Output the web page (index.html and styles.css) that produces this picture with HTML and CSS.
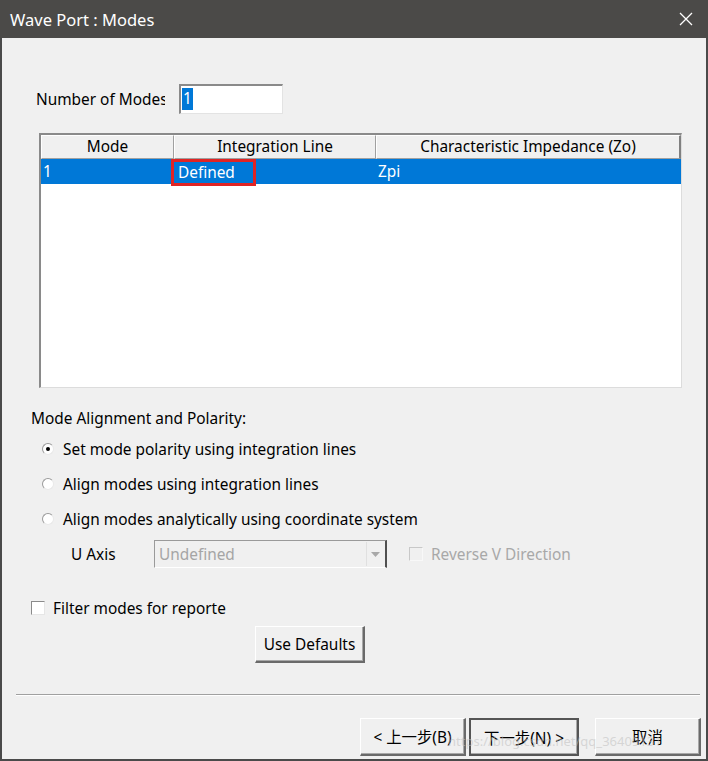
FILE: index.html
```html
<!DOCTYPE html>
<html>
<head>
<meta charset="utf-8">
<link rel="stylesheet" href="styles.css">
</head>
<body>
<div class="window">
  <div class="titlebar">
    <span class="title">Wave Port : Modes</span>
    <svg class="close" width="14" height="14" viewBox="0 0 14 14"><path d="M1 1L13 13M13 1L1 13" stroke="#fff" stroke-width="1.3" fill="none"/></svg>
  </div>
  <div class="content">
    <div class="num-row">
      <span class="num-label">Number of Modes</span>
      <div class="num-input"><span class="sel">1</span></div>
    </div>
    <div class="table">
      <div class="thead">
        <div class="th c1">Mode</div>
        <div class="th c2">Integration Line</div>
        <div class="th c3">Characteristic Impedance (Zo)</div>
      </div>
      <div class="trow selected">
        <div class="td c1">1</div>
        <div class="td c2"><span class="hl">Defined</span></div>
        <div class="td c3">Zpi</div>
      </div>
    </div>
    <div class="section-label">Mode Alignment and Polarity:</div>
    <div class="radio-row"><span class="radio on"></span><span>Set mode polarity using integration lines</span></div>
    <div class="radio-row"><span class="radio"></span><span>Align modes using integration lines</span></div>
    <div class="radio-row"><span class="radio"></span><span>Align modes analytically using coordinate system</span></div>
    <div class="axis-row">
      <span class="axis-label">U Axis</span>
      <div class="combo"><span>Undefined</span><span class="combo-btn"><svg width="9" height="5" viewBox="0 0 9 5"><path d="M0 0H9L4.5 5Z" fill="#a8a8a8"/></svg></span></div>
      <span class="check disabled"></span><span class="dis-text">Reverse V Direction</span>
    </div>
    <div class="filter-row">
      <span class="check"></span><span class="filter-text">Filter modes for reporte</span>
    </div>
    <div class="defaults-row"><button class="btn defaults">Use Defaults</button></div>
    <div class="sep"></div>
    <div class="footer">
      <button class="btn fbtn">&lt; 上一步(B)</button>
      <button class="btn fbtn default">下一步(N) &gt;</button>
      <button class="btn fbtn cancel">取消</button>
    </div>
    <div class="watermark">https://blog.csdn.net/qq_36409131</div>
  </div>
</div>
</body>
</html>
```
FILE: styles.css
```css
* { box-sizing: border-box; }
html, body { margin: 0; padding: 0; }
body {
  width: 708px; height: 761px; overflow: hidden;
  font-family: "Noto Sans", "Noto Sans CJK SC", sans-serif;
  font-size: 15.4px; color: #000; background: #f0f0f0;
}
.window {
  width: 708px; height: 761px;
  border-left: 2px solid #4a4a4a; border-right: 2px solid #4a4a4a; border-bottom: 2px solid #4a4a4a;
  display: flex; flex-direction: column; background: #f0f0f0;
}
.titlebar {
  height: 38px; background: #4b4a48; margin: 0 -2px;
  display: flex; align-items: center; justify-content: space-between;
  padding: 0 15px 0 10px; color: #fff;
}
.title { font-size: 16.5px; }
.content { position: relative; flex: 1; }
.num-row { display: flex; align-items: center; margin-top: 46px; padding-left: 34px; height: 30px; }
.num-label { width: 129px; margin-right: 14px; white-space: nowrap; overflow: hidden; }
.num-input {
  width: 104px; height: 30px; background: #fff;
  border-top: 2px solid #8a8a8a; border-left: 2px solid #8a8a8a;
  border-right: 1px solid #e3e3e3; border-bottom: 1px solid #e3e3e3;
  padding: 2px 1px; line-height: 22px;
}
.sel { background: #0078d7; color: #fff; padding: 0 1px; display: inline-block; height: 22px; }
.table {
  margin: 19px 0 0 37px; width: 643px; height: 255px; background: #fff;
  border-top: 2px solid #8a8a8a; border-left: 2px solid #8a8a8a;
  border-right: 1px solid #dcdcdc; border-bottom: 1px solid #dcdcdc;
}
.thead { display: flex; height: 24px; background: #f0f0f0; }
.th {
  text-align: center; line-height: 22px; border-right: 1px solid #a0a0a0; border-bottom: 1px solid #a0a0a0;
  border-top: 1px solid #fff; border-left: 1px solid #fff; white-space: nowrap;
}
.c1 { width: 133px; }
.c2 { width: 202px; }
.c3 { width: 305px; }
.th.c3 { border-right: 2px solid #808080; }
.trow { display: flex; height: 25px; }
.trow.selected { background: #0078d7; color: #fff; }
.td { line-height: 25px; padding-left: 2px; }
.td.c2 { padding-left: 0; }
.hl {
  display: inline-block; height: 27px; width: 85px; line-height: 21px;
  border: 3px solid #e02424; margin-left: -3px; padding-left: 4px;
}
.section-label { margin: 20px 0 0 29px; height: 22px; line-height: 22px; }
.radio-row { display: flex; align-items: center; height: 22px; margin: 8px 0 0 40px; }
.radio-row + .radio-row { margin-top: 13px; }
.radio {
  width: 12px; height: 12px; border-radius: 50%; margin-right: 9px;
  border: 1px solid #9a9a9a; border-right-color: #e8e8e8; border-bottom-color: #e8e8e8;
  background: #fff; position: relative;
}
.radio.on::after {
  content: ""; position: absolute; left: 3px; top: 3px; width: 4px; height: 4px; border-radius: 50%; background: #000;
}
.axis-row { display: flex; align-items: center; margin: 10px 0 0 69px; height: 28px; }
.axis-label { width: 83px; }
.combo {
  width: 233px; height: 28px; display: flex; justify-content: space-between; align-items: center;
  border-top: 1px solid #9a9a9a; border-left: 1px solid #9a9a9a;
  border-right: 2px solid #505050; border-bottom: 1px solid #fff;
  color: #a5a5a5; padding-left: 4px; background: #f0f0f0;
}
.combo-btn { width: 18px; height: 24px; display: flex; align-items: center; justify-content: center; border-left: 1px solid #e0e0e0; margin-right: 1px; }
.check {
  width: 14px; height: 14px; background: #fff;
  border: 1px solid #8a8a8a; border-right-color: #e6e6e6; border-bottom-color: #e6e6e6;
}
.check.disabled { margin-left: 22px; background: #f0f0f0; border-color: #c8c8c8; border-right-color: #f8f8f8; border-bottom-color: #f8f8f8; }
.dis-text { color: #a8a8a8; margin-left: 8px; }
.filter-row { display: flex; align-items: center; margin: 29px 0 0 29px; height: 22px; }
.filter-text { margin-left: 8px; width: 173px; white-space: nowrap; overflow: hidden; }
.defaults-row { margin: 7px 0 0 253px; }
.btn {
  font-family: inherit; font-size: 15.4px; color: #000; background: #f0f0f0;
  border-top: 1px solid #fff; border-left: 1px solid #fff;
  border-right: 2px solid #6a6a6a; border-bottom: 2px solid #6a6a6a;
  box-shadow: inset -1px -1px 0 #a8a8a8; padding: 0;
}
.defaults { width: 110px; height: 37px; }
.sep { margin: 31px 6px 0 14px; height: 2px; border-top: 1px solid #a0a0a0; border-bottom: 1px solid #fff; }
.footer { display: flex; margin: 22px 0 0 358px; }
.fbtn { width: 106px; height: 38px; }
.fbtn + .fbtn { margin-left: 3px; }
.fbtn.default { width: 110px; border: 2px solid #555; box-shadow: inset -1px -1px 0 #a8a8a8; }
.fbtn.cancel { margin-left: 16px; }
.watermark {
  position: absolute; left: 446px; top: 694px; color: rgba(190,190,190,0.55);
  font-size: 13px; white-space: nowrap; pointer-events: none;
}
```
